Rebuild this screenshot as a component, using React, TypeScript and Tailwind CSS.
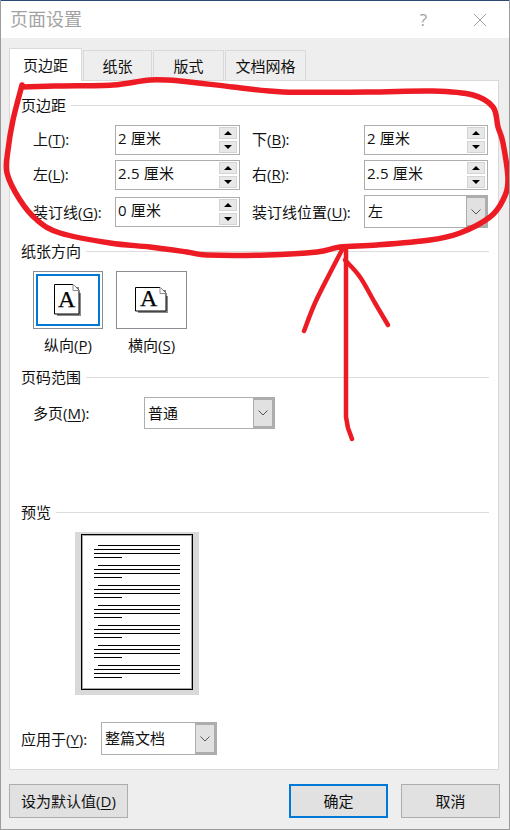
const FONT = "font-['Open_Sans','Noto_Sans_CJK_SC',sans-serif]"

type Pt = [number, number]

// catmull-rom through the traced points, so the markup looks hand drawn
function smooth(pts: Pt[]) {
  let d = `M${pts[0][0]} ${pts[0][1]}`
  for (let i = 0; i < pts.length - 1; i++) {
    const a = pts[Math.max(i - 1, 0)]
    const b = pts[i]
    const c = pts[i + 1]
    const e = pts[Math.min(i + 2, pts.length - 1)]
    d += ` C${b[0] + (c[0] - a[0]) / 6} ${b[1] + (c[1] - a[1]) / 6} ${c[0] - (e[0] - b[0]) / 6} ${c[1] - (e[1] - b[1]) / 6} ${c[0]} ${c[1]}`
  }
  return d
}

const LOOP: Pt[] = [
  [22, 87], [60, 86], [113, 85], [150, 80], [180, 81], [233, 87], [283, 92], [367, 92], [433, 91], [473, 95],
  [493, 107], [498, 127], [503, 143], [508, 180], [503, 200], [490, 217], [460, 233], [430, 240], [377, 245],
  [340, 247], [317, 252], [267, 255], [207, 255], [187, 252], [150, 247], [110, 243], [60, 233], [37, 220],
  [20, 200], [7, 173], [8, 150], [13, 120], [22, 85],
]

function SectionTitle({ label, className = '' }: { label: string; className?: string }) {
  return (
    <div className={`flex h-5 items-center gap-[5px] pl-[11px] pr-[9px] ${className}`}>
      <span className="text-[15px] leading-5">{label}</span>
      <div className="h-px flex-1 bg-[#dcdcdc]" />
    </div>
  )
}

function Label({ text, hot, colon = true, className = '' }: { text: string; hot: string; colon?: boolean; className?: string }) {
  return (
    <span className={`shrink-0 text-[15px] leading-5 ${className}`}>
      {text}(<span className="underline underline-offset-2">{hot}</span>){colon ? ':' : ''}
    </span>
  )
}

function Spinner({ value, className = '' }: { value: string; className?: string }) {
  return (
    <div className={`flex h-[30px] items-center justify-between border border-[#adadad] bg-white pl-[2px] pr-[2px] ${className}`}>
      <span className="pb-1 text-[15px] leading-5 tracking-[0.2px] whitespace-pre">{value}</span>
      <div className="flex flex-col gap-[2px]">
        <div className="flex h-3 w-[18px] items-center justify-center border border-[#d4d4d4] bg-[#e8e8e8]">
          <div className="h-0 w-0 border-x-[4px] border-b-[4px] border-x-transparent border-b-black" />
        </div>
        <div className="flex h-3 w-[18px] items-center justify-center border border-[#d4d4d4] bg-[#e8e8e8]">
          <div className="h-0 w-0 border-x-[4px] border-t-[4px] border-x-transparent border-t-black" />
        </div>
      </div>
    </div>
  )
}

function Select({ value, className = '' }: { value: string; className?: string }) {
  return (
    <div className={`flex items-stretch border border-[#adadad] bg-white ${className}`}>
      <span className="flex flex-1 items-center pl-[3px] text-[15px]">{value}</span>
      <div className="flex w-[21px] items-center justify-center border-[2px] border-l border-[#adadad] bg-[#e1e1e1]">
        <svg width="10" height="6" viewBox="0 0 10 6" fill="none" stroke="#555" strokeWidth="1">
          <path d="M0.5 0.5 5 5 9.5 0.5" />
        </svg>
      </div>
    </div>
  )
}

function OrientationIcon({ landscape }: { landscape?: boolean }) {
  const w = landscape ? 31 : 25
  const h = landscape ? 24 : 30
  return (
    <svg className="overflow-visible" width={w + 3} height={h + 3} viewBox={`0 0 ${w + 3} ${h + 3}`}>
      <path d={`M3 3H${w}V9H${w + 2}V${h + 2}H3Z`} fill="#8a8a8a" />
      <path d={`M.5 .5H${w - 6}L${w} 6.5V${h}H.5Z`} fill="#fff" stroke="#000" />
      <path d={`M${w - 6} .5V6.5H${w}`} fill="#fff" stroke="#8a8a8a" />
      <text x={landscape ? 13.7 : 12.7} y={landscape ? 18.7 : 22.7} textAnchor="middle" fontSize="24" fontFamily="'Liberation Serif', serif" fill="#000" stroke="#000" strokeWidth="0.25">A</text>
    </svg>
  )
}

function PreviewPage() {
  return (
    <div className="mt-[9px] ml-[65px] h-[163px] w-[124px] bg-[#d9d9d9] px-[6px] pt-[2px]">
      <div className="flex h-[156px] w-[112px] flex-col gap-[7px] border border-black bg-white pt-[10px] pl-[12px] shadow-[inset_0_0_0_1px_rgba(0,0,0,0.35)]">
        {[0, 1, 2, 3, 4, 5, 6].map((i) => (
          <div key={i} className="flex flex-col gap-[3px]">
            <div className="ml-1 h-px w-[82px] bg-black" />
            <div className="h-px w-[86px] bg-black" />
            <div className="h-px w-[86px] bg-black" />
            <div className="h-px w-[28px] bg-black" />
          </div>
        ))}
      </div>
    </div>
  )
}

export default function App() {
  return (
    <div className={`relative flex h-[830px] w-[510px] flex-col overflow-hidden border-x border-b border-[#9c9c9c] bg-[#eeeeee] text-[#111] ${FONT}`}>
      <div className="flex h-[38px] items-center justify-between border-t border-[#2d4a75] bg-white pl-[9px] pr-[22px]">
        <span className="text-[18px] text-[#a3a3a3]">页面设置</span>
        <div className="flex items-center gap-[46px]">
          <span className="text-[17px] text-[#a0a0a0]">?</span>
          <svg width="14" height="14" viewBox="0 0 14 14" stroke="#a0a0a0" strokeWidth="1" fill="none">
            <path d="M1 1 13 13M13 1 1 13" />
          </svg>
        </div>
      </div>

      <div className="mt-[10px] ml-2 flex h-[33px] items-end gap-px text-[15px]">
        <div className="z-10 flex h-[33px] w-[73px] items-center justify-center border border-b-0 border-[#d9d9d9] bg-white">页边距</div>
        <div className="flex h-[31px] w-[69px] items-center justify-center border border-[#d9d9d9] border-b-0">纸张</div>
        <div className="flex h-[31px] w-[71px] items-center justify-center border border-[#d9d9d9] border-b-0">版式</div>
        <div className="flex h-[31px] w-[81px] items-center justify-center border border-[#d9d9d9] border-b-0">文档网格</div>
      </div>

      <div className="mx-2 -mt-px h-[690px] w-[490px] border border-[#d9d9d9] bg-white">
        <SectionTitle label="页边距" className="mt-[14px]" />
        <div className="mt-[10px] flex flex-col gap-[5px] pl-[23px]">
          <div className="flex items-center">
            <Label text="上" hot="T" className="w-[82px] pb-[2px]" />
            <Spinner value="2 厘米" className="w-[125px]" />
            <Label text="下" hot="B" className="ml-3 w-[112px] pb-[2px]" />
            <Spinner value="2 厘米" className="w-[124px]" />
          </div>
          <div className="flex items-center">
            <Label text="左" hot="L" className="w-[82px] pb-[2px]" />
            <Spinner value="2.5 厘米" className="w-[125px]" />
            <Label text="右" hot="R" className="ml-3 w-[112px] pb-[2px]" />
            <Spinner value="2.5 厘米" className="w-[124px]" />
          </div>
          <div className="flex h-[33px] items-center">
            <Label text="装订线" hot="G" className="w-[82px]" />
            <Spinner value="0 厘米" className="w-[125px]" />
            <Label text="装订线位置" hot="U" className="ml-3 w-[112px]" />
            <Select value="左" className="h-[33px] w-[124px]" />
          </div>
        </div>

        <SectionTitle label="纸张方向" className="mt-[13px]" />
        <div className="mt-[10px] flex gap-[13px] pl-[23px]">
          <div className="flex h-[58px] w-[70px] items-center justify-center border border-[#8c8c94] bg-white shadow-[inset_0_0_0_2px_#fff,inset_0_0_0_4px_#0078d7]">
            <OrientationIcon />
          </div>
          <div className="flex h-[58px] w-[71px] items-center justify-center border border-[#8c8c94] bg-white">
            <OrientationIcon landscape />
          </div>
        </div>
        <div className="mt-[6px] flex gap-[13px] pl-[23px] text-[15px] leading-5">
          <div className="w-[70px] text-center"><Label text="纵向" hot="P" colon={false} /></div>
          <div className="w-[71px] text-center"><Label text="横向" hot="S" colon={false} /></div>
        </div>

        <SectionTitle label="页码范围" className="mt-[12px]" />
        <div className="mt-[10px] flex items-center pl-[23px]">
          <Label text="多页" hot="M" className="w-[111px]" />
          <Select value="普通" className="h-[32px] w-[131px]" />
        </div>

        <SectionTitle label="预览" className="mt-[73px]" />
        <div className="pt-px">
          <PreviewPage />
        </div>

        <div className="mt-[27px] flex items-center pl-[11px]">
          <Label text="应用于" hot="Y" className="w-[80px]" />
          <Select value="整篇文档" className="h-[33px] w-[116px]" />
        </div>
      </div>

      <div className="mt-[14px] ml-2 flex h-[34px] text-[15px]">
        <button className="w-[119px] border border-[#adadad] bg-[#e1e1e1]">
          设为默认值(<span className="underline underline-offset-2">D</span>)
        </button>
        <button className="ml-[161px] w-[99px] border-2 border-[#0078d7] bg-[#e1e1e1]">确定</button>
        <button className="ml-[13px] w-[99px] border border-[#adadad] bg-[#e1e1e1]">取消</button>
      </div>

      {/* hand drawn red markup over the dialog */}
      <svg className="pointer-events-none absolute -left-px top-0" width="510" height="830" viewBox="0 0 510 830" fill="none" stroke="#ed1c24" strokeLinecap="round" strokeLinejoin="round">
        <path strokeWidth="5.5" d={smooth(LOOP)} />
        <path strokeWidth="4.5" d="M346 250 L346 417 L348 428 L352 439" />
        <path strokeWidth="4.5" d={smooth([[342, 250], [330, 273], [315, 303], [304, 331]])} />
        <path strokeWidth="4.5" d={smooth([[345, 260], [360, 277], [375, 303], [388, 325]])} />
      </svg>
    </div>
  )
}
